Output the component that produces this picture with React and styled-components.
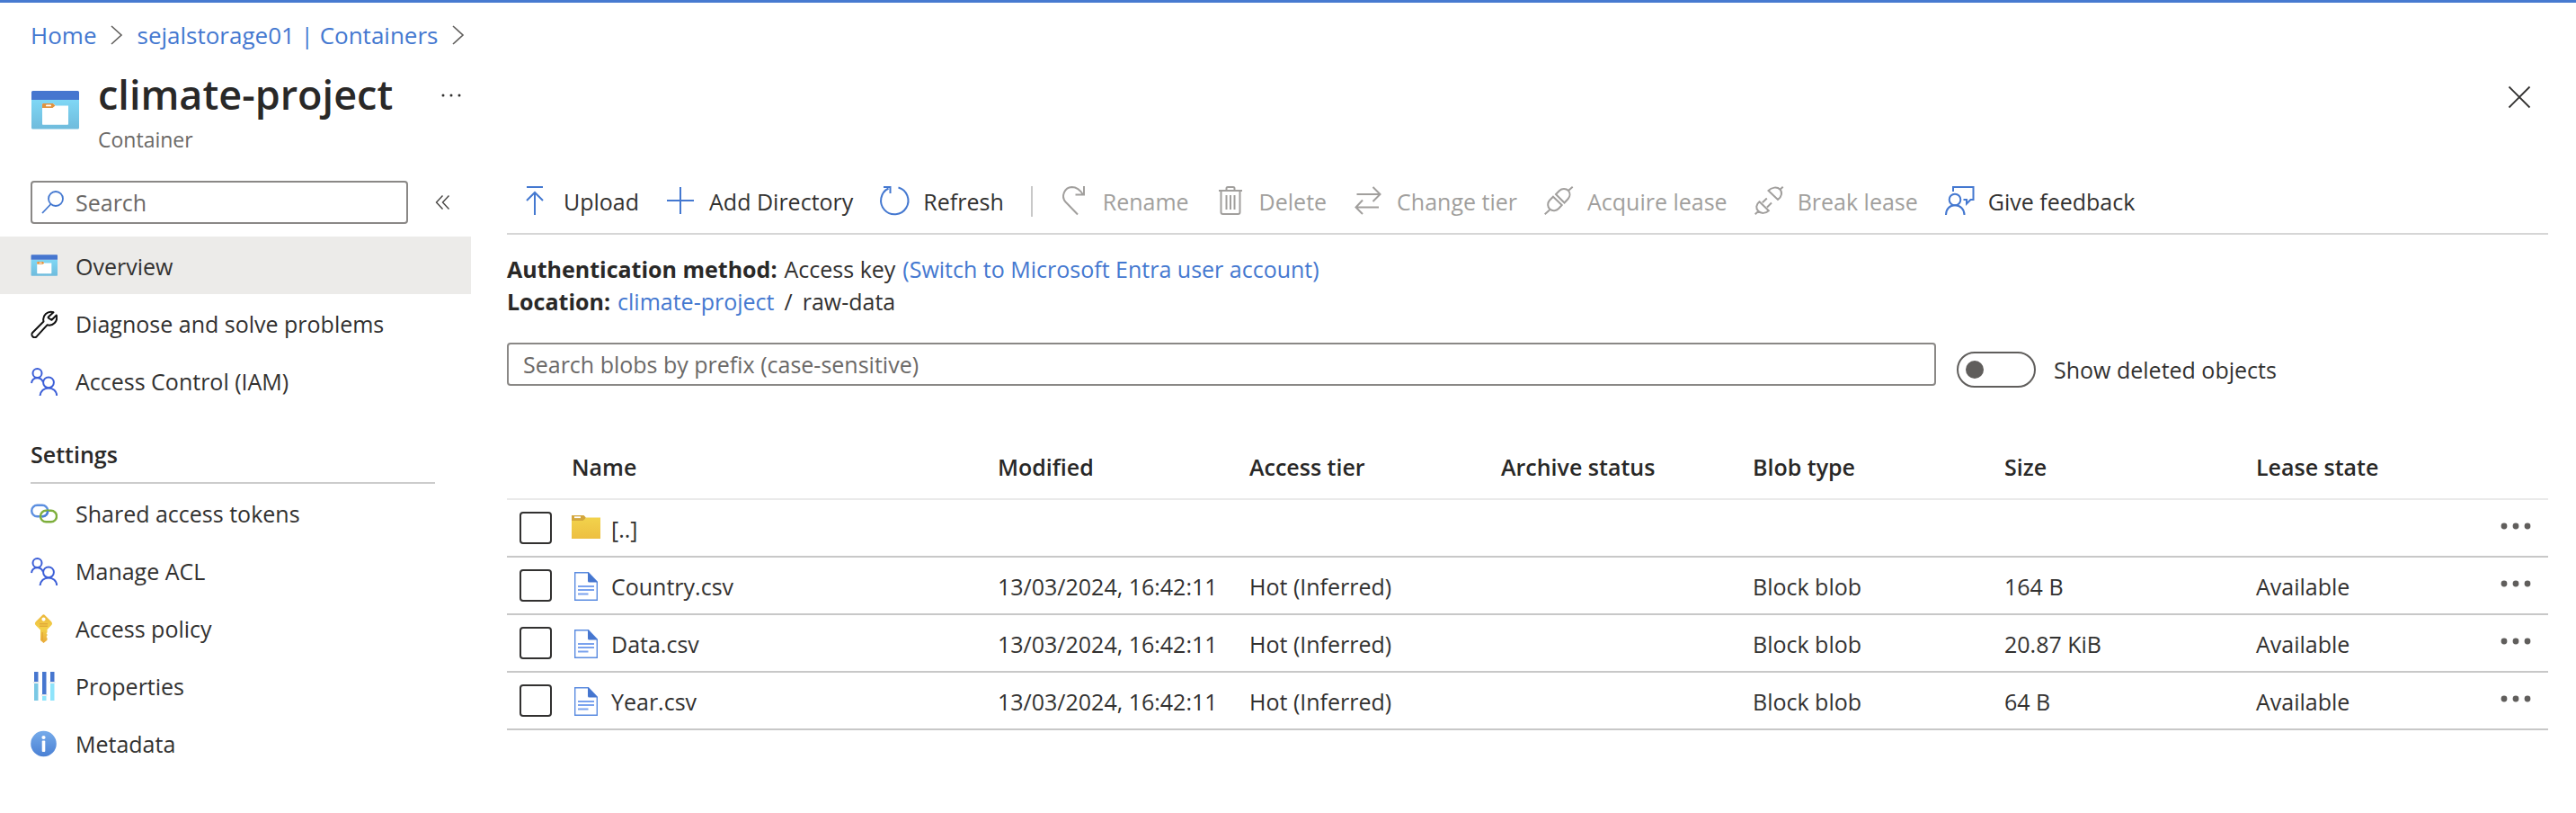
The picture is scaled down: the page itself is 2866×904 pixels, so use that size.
import React from 'react';
import styled, { createGlobalStyle, css } from 'styled-components';

const GlobalStyle = createGlobalStyle`
  *, *::before, *::after { box-sizing: border-box; }
  body { margin: 0; background: #fff; }
  body, button, input { font-family: 'Open Sans', 'Noto Sans', sans-serif; font-size: 25px; line-height: 36px; color: #323130; }
  button { background: none; border: 0; padding: 0; cursor: pointer; }
  a { color: #4478d0; text-decoration: none; }
  svg { display: block; flex: none; }
`;

const Page = styled.div`
  border-top: 3px solid #477ad0;
`;

const Breadcrumb = styled.nav`
  display: flex;
  align-items: center;
  gap: 15px;
  height: 72px;
  padding: 0 34px;
  font-size: 26px;
`;

const Header = styled.header`
  display: flex;
  align-items: flex-start;
  height: 110px;
  padding: 0 50px 0 34px;
`;

const HeaderIcon = styled.div`
  padding-top: 22px;
  margin-right: 21px;
`;

const Title = styled.h1`
  margin: 0 0 2px;
  font-size: 45px;
  line-height: 60px;
  font-weight: 600;
  color: #292827;
`;

const Subtitle = styled.div`
  font-size: 23px;
  color: #6b6967;
`;

const MoreButton = styled.button`
  margin: 26px 0 0 50px;
`;

const CloseButton = styled.button`
  margin: 20px 0 0 auto;
`;

const Body = styled.div`
  display: flex;
  align-items: flex-start;
  padding-top: 14px;
`;

const Sidebar = styled.aside`
  width: 524px;
  flex: none;
`;

const SearchRow = styled.div`
  display: flex;
  align-items: center;
  gap: 30px;
  padding: 2px 0 14px 34px;
`;

const boxStyle = css`
  height: 48px;
  border: 2px solid #8a8886;
  border-radius: 4px;
  background: #fff;
`;

const SearchBox = styled.label`
  ${boxStyle}
  display: flex;
  align-items: center;
  gap: 12px;
  width: 420px;
  padding-left: 10px;
`;

const SearchInput = styled.input`
  flex: 1;
  min-width: 0;
  height: 40px;
  padding: 0;
  border: 0;
  outline: 0;
  background: none;
  &::placeholder { color: #6b6967; opacity: 1; }
`;

const NavList = styled.ul`
  list-style: none;
  margin: 0;
  padding: 0;
`;

const NavLink = styled.a`
  display: flex;
  align-items: center;
  gap: 20px;
  height: 64px;
  padding: 2px 0 0 34px;
  color: #323130;
  background: ${(p) => (p.$active ? '#ecebe9' : 'transparent')};
`;

const NavHeading = styled.h2`
  margin: 0 40px 0 34px;
  padding-top: 32px;
  height: 83px;
  font-size: 25px;
  font-weight: 600;
  color: #292827;
  border-bottom: 2px solid #cccccc;
`;

const Main = styled.main`
  flex: 1;
  min-width: 0;
  padding: 0 31px 0 40px;
`;

const Toolbar = styled.div`
  display: flex;
  align-items: center;
  height: 62px;
  padding-bottom: 10px;
  border-bottom: 2px solid #d6d6d6;
`;

const ToolButton = styled.button`
  display: flex;
  align-items: center;
  gap: 16px;
  padding: 0 15px;
  white-space: nowrap;
  color: ${(p) => (p.disabled ? '#a19f9d' : '#323130')};
`;

const Divider = styled.span`
  width: 2px;
  height: 34px;
  margin: 0 15px;
  background: #c8c8c8;
`;

const Details = styled.dl`
  margin: 0;
  padding: 20px 0 28px;
`;

const DetailRow = styled.div`
  display: flex;
  gap: 8px;
`;

const Term = styled.dt`
  font-weight: 700;
  color: #292827;
`;

const Value = styled.dd`
  display: flex;
  gap: ${(p) => p.$gap}px;
  margin: 0;
`;

const FilterRow = styled.div`
  display: flex;
  gap: 23px;
`;

const PrefixInput = styled.input`
  ${boxStyle}
  flex: 1;
  min-width: 0;
  padding: 0 16px;
  outline: 0;
  &::placeholder { color: #6b6967; opacity: 1; }
`;

const ToggleLabel = styled.label`
  display: flex;
  align-items: center;
  gap: 20px;
  width: 658px;
  padding-top: 10px;
  height: 50px;
`;

const Toggle = styled.input`
  appearance: none;
  display: flex;
  align-items: center;
  width: 88px;
  height: 40px;
  margin: 0;
  padding: 0 8px;
  border: 2px solid #605e5c;
  border-radius: 20px;
  &::before {
    content: '';
    width: 20px;
    height: 20px;
    border-radius: 50%;
    background: #605e5c;
  }
`;

const Table = styled.table`
  width: 100%;
  margin-top: 55px;
  table-layout: fixed;
  border-collapse: separate;
  border-spacing: 0;
  text-align: left;
`;

const Col = styled.col`
  width: ${(p) => p.$w}px;
`;

const HeadCell = styled.th`
  height: 70px;
  padding: 0 0 2px;
  font-weight: 600;
  color: #292827;
  border-bottom: 2px solid #eaeaea;
`;

const Cell = styled.td`
  height: 64px;
  padding: 2px 0 0;
  white-space: nowrap;
  border-bottom: 2px solid #c8c8c8;
`;

const SelectCell = styled(Cell)`
  padding: 0 0 0 14px;
`;

const MenuCell = styled(Cell)`
  padding: 0 18px 4px 0;
`;

const Checkbox = styled.input`
  appearance: none;
  display: block;
  width: 36px;
  height: 36px;
  margin: 0;
  border: 2px solid #323130;
  border-radius: 4px;
`;

const FileName = styled.span`
  display: flex;
  align-items: center;
  gap: 12px;
`;

const RowMenu = styled.button`
  display: block;
  margin-left: auto;
`;

/* ---------- icons ---------- */

const Chevron = () => (
  <svg width="15" height="24" viewBox="0 0 15 24" fill="none" stroke="#605e5c" strokeWidth="1.6">
    <path d="M2 2L13 12L2 22" />
  </svg>
);

const Collapse = () => (
  <svg width="18" height="18" viewBox="0 0 18 18" fill="none" stroke="#484644" strokeWidth="1.4">
    <path d="M8.500 1.500L1.500 9L8.500 16.500M15.500 1.500L8.500 9L15.500 16.500" />
  </svg>
);

const Close = () => (
  <svg width="26" height="26" viewBox="0 0 26 26" stroke="#323130" strokeWidth="1.8">
    <path d="M1.500 1.500L24.500 24.500M24.500 1.500L1.500 24.500" />
  </svg>
);

const Dots = ({ w = 36, r = 3.4, step = 13, color = '#605e5c' }) => (
  <svg width={w} height="10" viewBox={`0 0 ${w} 10`} fill={color}>
    {[-1, 0, 1].map((i) => <circle key={i} cx={w / 2 + i * step} cy="5" r={r} />)}
  </svg>
);

const Magnifier = () => (
  <svg width="26" height="28" viewBox="0 0 26 28" fill="none" stroke="#4478d0" strokeWidth="1.8">
    <circle cx="16" cy="10" r="8" />
    <path d="M10.500 16L1 26" />
  </svg>
);

const ContainerIcon = ({ size }) => (
  <svg width={size} height={size} viewBox="0 0 54 54">
    <defs>
      <linearGradient id={`box${size}`} x1="0" y1="0" x2="0" y2="1">
        <stop offset="0" stopColor="#7fd7f5" />
        <stop offset="1" stopColor="#6fbbdc" />
      </linearGradient>
    </defs>
    <path d="M1 14H54V45a1.500 1.500 0 0 1-1.500 1.500H2.500A1.500 1.500 0 0 1 1 45z" fill={`url(#box${size})`} />
    <path d="M1 14V5.500A1.500 1.500 0 0 1 2.500 4H52.500A1.500 1.500 0 0 1 54 5.500V14z" fill="#4676cf" />
    <path d="M13 18H25L28 20.500H42V41a.8.8 0 0 1-.8.8H13.800a.8.8 0 0 1-.8-.8z" fill="#fff" />
    <path d="M13.500 18H25L27.500 20.500L24.500 23H13V18.500z" fill="#e2923d" />
    <rect x="17" y="19.500" width="6" height="1.800" rx=".9" fill="#fff" />
  </svg>
);

const Wrench = () => (
  <svg width="30" height="32" viewBox="0 0 30 32" fill="none" stroke="#111" strokeWidth="2" strokeLinejoin="round">
    <path d="M25.500 3.300A8.500 8.500 0 0 0 14.500 13.500L2.300 25.800a3.100 3.100 0 0 0 4.500 4.400L18.500 17.300A8.500 8.500 0 0 0 28.800 6.500L23.500 11.800L19.700 9.500V8.500z" />
  </svg>
);

const People = () => (
  <svg width="30" height="32" viewBox="0 0 30 32" fill="none" stroke="#3c5fd7" strokeWidth="2">
    <circle cx="7.500" cy="7" r="5" />
    <circle cx="20" cy="17.300" r="5.900" />
    <path d="M1 18C1.500 14.500 4 12.200 7.500 12.200C10.500 12.200 12.700 13.800 13.800 16.500" />
    <path d="M10.500 32C11 27 15 23.400 20 23.400C25 23.400 29 27 29.300 32" />
  </svg>
);

const Links = () => (
  <svg width="30" height="24" viewBox="0 0 30 24" fill="none" strokeWidth="2.400">
    <rect x="1.200" y="2.800" width="18" height="12.500" rx="6.200" stroke="#5c8fe0" />
    <rect x="11" y="8.800" width="18" height="12.500" rx="6.200" stroke="#7dae3b" />
    <path d="M13 15.300C17 15.300 19.200 12.500 19.200 9" stroke="#4c7fd6" />
  </svg>
);

const KeyIcon = () => (
  <svg width="30" height="32" viewBox="0 0 30 32">
    <defs>
      <linearGradient id="key" x1="0" y1="0" x2="0" y2="1">
        <stop offset="0" stopColor="#ecb83d" />
        <stop offset=".5" stopColor="#f3d149" />
        <stop offset="1" stopColor="#e9a93a" />
      </linearGradient>
    </defs>
    <path fillRule="evenodd" fill="url(#key)" d="M12.900 1.200a2.200 2.200 0 0 1 3.200 0L22.900 8a3.200 3.200 0 0 1 0 4.500L18.500 17v3.200l-1 1 1 1v1.600l-1 1.200 1 1.200v2.500L14.500 32L11 29V17.500L6 12.500A3.200 3.200 0 0 1 6 8zM14.500 3.500a2.100 2.100 0 1 0 0 4.200a2.100 2.100 0 1 0 0-4.200z" />
    <path d="M10 10.800H19M10 13.200H19" stroke="#dc9c33" strokeWidth="1" />
    <path d="M13.200 20V29" stroke="#e0a035" strokeWidth="1" />
  </svg>
);

const Sliders = () => (
  <svg width="30" height="32" viewBox="0 0 30 32">
    <path d="M4 0h4.500v11H4zM13 0h4.500v25H13zM22 0h4.500v11H22z" fill="#4676cf" />
    <path d="M4 13h4.500v19H4z" fill="#79c8e4" />
    <path d="M13 27h4.500v5H13zM22 13h4.500v19H22z" fill="#8fe4fb" />
    <path d="M3 11h6.500v1.600H3zM12 25h6.500v1.600H12zM21 11h6.500v1.600H21z" fill="#dfe6ea" />
  </svg>
);

const Info = () => (
  <svg width="30" height="30" viewBox="0 0 30 30">
    <defs>
      <linearGradient id="info" x1="0" y1="0" x2="0" y2="1">
        <stop offset="0" stopColor="#76abea" />
        <stop offset="1" stopColor="#4a80d4" />
      </linearGradient>
    </defs>
    <circle cx="14.500" cy="15" r="14.300" fill="url(#info)" />
    <circle cx="14.500" cy="8" r="2.100" fill="#fff" />
    <rect x="12.700" y="11.500" width="3.600" height="12.500" rx="1" fill="#fff" />
  </svg>
);

const ToolIcon = styled.svg.attrs({ width: 32, height: 34, viewBox: '0 0 32 34', fill: 'none', strokeWidth: 2 })`
  overflow: visible;
  stroke: ${(p) => (p.$muted ? '#a19f9d' : '#4478d0')};
`;

const UploadIcon = () => (
  <ToolIcon><path d="M7 1H25M16 32V7M7 16L16 7L25 16" /></ToolIcon>
);
const AddIcon = () => (
  <ToolIcon><path d="M1 16H31M16 1V31" /></ToolIcon>
);
const RefreshIcon = () => (
  <ToolIcon><path d="M20.500 1.500A15.200 15.200 0 1 1 9.500 2.500M4 1H11.500V8" /></ToolIcon>
);
const RenameIcon = () => (
  <ToolIcon $muted><path d="M20 31.500L6.500 17.500A10 10 0 0 1 13.500 1C19 1 23 4.500 26 9.500M27 0V9.500H17.500" /></ToolIcon>
);
const DeleteIcon = () => (
  <ToolIcon $muted>
    <path d="M3 5H29M11.500 5V2.500A1.500 1.500 0 0 1 13 1H19A1.500 1.500 0 0 1 20.500 2.500V5M5.500 5V29A2 2 0 0 0 7.500 31H24.500A2 2 0 0 0 26.500 29V5M11.500 10V26M16 10V26M20.500 10V26" />
  </ToolIcon>
);
const TierIcon = () => (
  <ToolIcon $muted><path d="M3.500 9H29M21.500 1L29.500 9L21.500 17M28 23.500H2.500M10 15.500L2.500 23.500L10 31" /></ToolIcon>
);
const AcquireIcon = () => (
  <ToolIcon $muted>
    <path d="M.7 31.300L6 26.500M31.700.7L27.500 4.500M10 11.700L19.700 21L16 25A7 7 0 0 1 6.300 25.500A7 7 0 0 1 5.800 16ZM13 9L22.500 18.500L26.700 14A7 7 0 0 0 27 5A7 7 0 0 0 17 5Z" />
  </ToolIcon>
);
const BreakIcon = () => (
  <ToolIcon $muted>
    <path d="M.7 31.300L4.500 27.800M31.700.7L28.700 3.500M5.500 17.300L15.800 27.300C12.500 30.500 7.300 30.800 4.300 27.800C1.300 24.800 1.500 20.500 5.500 17.300ZM8.800 18.300L13.800 13.500M14 23.500L19 18.500M15.500 5L26 15C30.500 11.500 31.300 6.500 28.300 3.500C25.300.5 19 1 15.500 5Z" />
  </ToolIcon>
);
const FeedbackIcon = () => (
  <ToolIcon>
    <circle cx="11" cy="15" r="6.300" />
    <path d="M1 32C1 25.500 5 21.300 11 21.300C17 21.300 21.500 25.500 21.500 32M9 6V1H31.500V15H28.500L24 19.500V15H20.500" />
  </ToolIcon>
);

const Folder = () => (
  <svg width="32" height="32" viewBox="0 0 32 32">
    <defs>
      <linearGradient id="folder" x1="0" y1="0" x2="0" y2="1">
        <stop offset="0" stopColor="#f2d24b" />
        <stop offset="1" stopColor="#edbf41" />
      </linearGradient>
    </defs>
    <path d="M0 1H13.500L16 3.500H32V8H0z" fill="#d3a63c" />
    <path d="M16 3H32V4.500H15z" fill="#f6e7a5" />
    <path d="M0 7H12.500L16 4H32V27H0z" fill="url(#folder)" />
    <rect x="3" y="2.300" width="7" height="1.800" fill="#fff" />
  </svg>
);

const FileIcon = () => (
  <svg width="32" height="32" viewBox="0 0 32 32">
    <path d="M3.700.7H18.500L28.300 11V31.300H3.700z" fill="#fff" stroke="#5a8be0" strokeWidth="1.400" />
    <path d="M18 0L29 11.500H19.500A1.500 1.500 0 0 1 18 10z" fill="#4676cf" />
    <path d="M7 16H25M7 20H25M7 24.500H18.500" stroke="#7aa2ee" strokeWidth="2" />
  </svg>
);

/* ---------- content ---------- */

const topNav = [
  ['Overview', <ContainerIcon size={30} />, true],
  ['Diagnose and solve problems', <Wrench />],
  ['Access Control (IAM)', <People />],
];

const settingsNav = [
  ['Shared access tokens', <Links />],
  ['Manage ACL', <People />],
  ['Access policy', <KeyIcon />],
  ['Properties', <Sliders />],
  ['Metadata', <Info />],
];

const actions = [
  ['Upload', UploadIcon, false],
  ['Add Directory', AddIcon, false],
  ['Refresh', RefreshIcon, false],
  null,
  ['Rename', RenameIcon, true],
  ['Delete', DeleteIcon, true],
  ['Change tier', TierIcon, true],
  ['Acquire lease', AcquireIcon, true],
  ['Break lease', BreakIcon, true],
  ['Give feedback', FeedbackIcon, false],
];

const columns = ['Name', 'Modified', 'Access tier', 'Archive status', 'Blob type', 'Size', 'Lease state'];

const files = [
  ['Country.csv', '164 B'],
  ['Data.csv', '20.87 KiB'],
  ['Year.csv', '64 B'],
].map(([name, size]) => ({
  name,
  icon: <FileIcon />,
  cells: ['13/03/2024, 16:42:11', 'Hot (Inferred)', '', 'Block blob', size, 'Available'],
}));

const rows = [{ name: '[..]', icon: <Folder />, cells: ['', '', '', '', '', ''] }, ...files];

const Nav = ({ items }) => (
  <NavList>
    {items.map(([label, icon, active]) => (
      <li key={label}>
        <NavLink href="#" $active={active}>{icon}{label}</NavLink>
      </li>
    ))}
  </NavList>
);

export default function App() {
  return (
    <Page>
      <GlobalStyle />
      <Breadcrumb aria-label="Breadcrumb">
        <a href="#">Home</a>
        <Chevron />
        <a href="#">sejalstorage01 | Containers</a>
        <Chevron />
      </Breadcrumb>
      <Header>
        <HeaderIcon><ContainerIcon size={54} /></HeaderIcon>
        <div>
          <Title>climate-project</Title>
          <Subtitle>Container</Subtitle>
        </div>
        <MoreButton aria-label="More"><Dots w={30} r={1.5} step={9} color="#323130" /></MoreButton>
        <CloseButton aria-label="Close"><Close /></CloseButton>
      </Header>
      <Body>
        <Sidebar>
          <SearchRow>
            <SearchBox>
              <Magnifier />
              <SearchInput type="text" placeholder="Search" aria-label="Search menu" />
            </SearchBox>
            <button aria-label="Collapse menu"><Collapse /></button>
          </SearchRow>
          <Nav items={topNav} />
          <NavHeading>Settings</NavHeading>
          <Nav items={settingsNav} />
        </Sidebar>
        <Main>
          <Toolbar>
            {actions.map((a, i) => {
              if (!a) return <Divider key={i} />;
              const [label, Icon, disabled] = a;
              return <ToolButton key={label} disabled={disabled}><Icon />{label}</ToolButton>;
            })}
          </Toolbar>
          <Details>
            <DetailRow>
              <Term>Authentication method:</Term>
              <Value $gap={8}>Access key <a href="#">(Switch to Microsoft Entra user account)</a></Value>
            </DetailRow>
            <DetailRow>
              <Term>Location:</Term>
              <Value $gap={11}><a href="#">climate-project</a><span>/</span><span>raw-data</span></Value>
            </DetailRow>
          </Details>
          <FilterRow>
            <PrefixInput type="text" placeholder="Search blobs by prefix (case-sensitive)" aria-label="Search blobs by prefix" />
            <ToggleLabel>
              <Toggle type="checkbox" role="switch" />
              Show deleted objects
            </ToggleLabel>
          </FilterRow>
          <Table>
            <colgroup>
              <Col $w={72} />
              <col />
              {columns.slice(2).map((c) => <Col key={c} $w={280} />)}
              <Col $w={240} />
              <Col $w={85} />
            </colgroup>
            <thead>
              <tr>
                <HeadCell aria-label="Select" />
                {columns.map((c) => <HeadCell key={c} scope="col">{c}</HeadCell>)}
                <HeadCell aria-label="Actions" />
              </tr>
            </thead>
            <tbody>
              {rows.map((r) => (
                <tr key={r.name}>
                  <SelectCell><Checkbox type="checkbox" aria-label={`Select ${r.name}`} /></SelectCell>
                  <Cell><FileName>{r.icon}{r.name}</FileName></Cell>
                  {r.cells.map((c, i) => <Cell key={i}>{c}</Cell>)}
                  <MenuCell><RowMenu aria-label={`Actions for ${r.name}`}><Dots /></RowMenu></MenuCell>
                </tr>
              ))}
            </tbody>
          </Table>
        </Main>
      </Body>
    </Page>
  );
}
